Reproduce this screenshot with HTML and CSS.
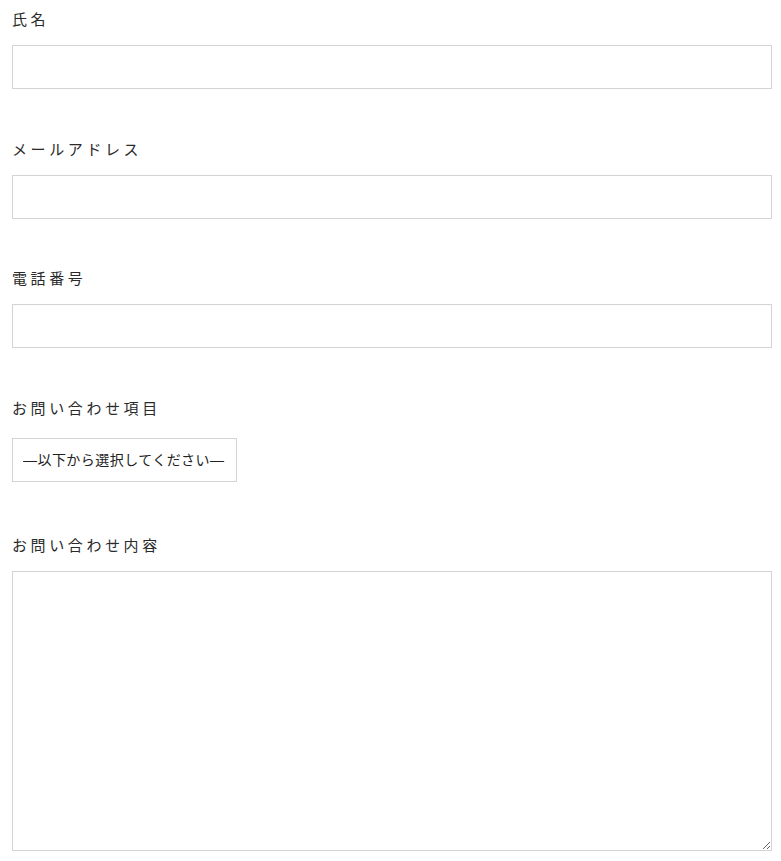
FILE: index.html
```html
<!DOCTYPE html>
<html lang="ja">
<head>
<meta charset="utf-8">
<title>お問い合わせ</title>
<link rel="stylesheet" href="styles.css">
</head>
<body>
<form class="form">
  <div class="field">
    <label class="label" for="name">氏名</label>
    <input class="input" id="name" type="text">
  </div>
  <div class="field">
    <label class="label" for="email">メールアドレス</label>
    <input class="input" id="email" type="email">
  </div>
  <div class="field">
    <label class="label" for="tel">電話番号</label>
    <input class="input" id="tel" type="tel">
  </div>
  <div class="field field-select">
    <label class="label label-select" for="topic">お問い合わせ項目</label>
    <select class="select" id="topic">
      <option>—以下から選択してください—</option>
    </select>
  </div>
  <div class="field">
    <label class="label" for="msg">お問い合わせ内容</label>
    <textarea class="textarea" id="msg"></textarea>
  </div>
</form>
</body>
</html>
```
FILE: styles.css
```css
html, body {
  margin: 0;
  padding: 0;
  background: #fff;
}
.form {
  padding: 7px 9px 0 12px;
}
.field {
  margin-bottom: 47.5px;
}
.field-select {
  margin-bottom: 51px;
}
.label {
  display: block;
  font-family: "Liberation Serif", "Noto Sans CJK JP", serif;
  font-size: 15px;
  line-height: 27px;
  letter-spacing: 3.6px;
  color: #2a2a2a;
  margin-bottom: 11px;
}
.label-select {
  margin-bottom: 15.5px;
}
.input {
  display: block;
  box-sizing: border-box;
  width: 100%;
  height: 44px;
  border: 1px solid #d3d3d3;
  border-radius: 0;
  padding: 0 10px;
  margin: 0;
  font-size: 14px;
  background: #fff;
}
.select {
  display: block;
  box-sizing: border-box;
  -webkit-appearance: none;
  appearance: none;
  width: 225px;
  height: 44px;
  margin: 0;
  padding: 0 10px;
  border: 1px solid #d3d3d3;
  border-radius: 0;
  background: #fff;
  font-family: "Liberation Sans", "Noto Sans CJK JP", sans-serif;
  font-size: 14px;
  letter-spacing: 0.45px;
  color: #222;
}
.textarea {
  display: block;
  box-sizing: border-box;
  width: 100%;
  height: 280px;
  border: 1px solid #d3d3d3;
  border-radius: 0;
  padding: 10px;
  margin: 0;
  font-size: 14px;
  background: #fff;
}
```
